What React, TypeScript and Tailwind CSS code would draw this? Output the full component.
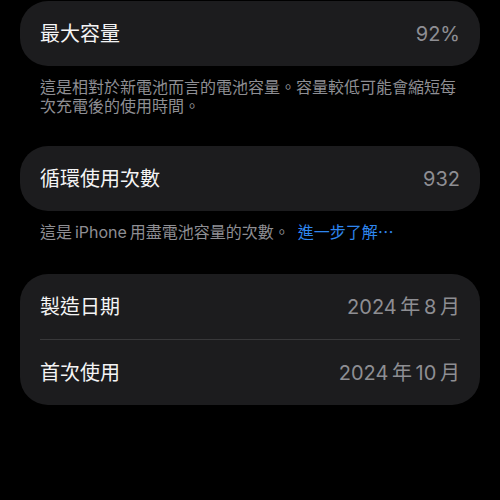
import React from 'react';

const font = {
  fontFamily: '"Inter", "Noto Sans CJK TC", "Noto Sans CJK SC", sans-serif',
};

const Row = ({ label, value }: { label: string; value: string }) => (
  <div className="flex items-center justify-between h-[65px] px-5">
    <span className="text-[20px] text-[#f4f4f5]">{label}</span>
    <span className="text-[20px] text-[#8e8e93]">{value}</span>
  </div>
);

export default function App() {
  return (
    <div className="w-[500px] h-[500px] bg-black overflow-hidden" style={font}>
      <div className="px-5 pt-px">
        {/* Max capacity */}
        <div className="bg-[#1c1c1e] rounded-[28px]">
          <Row label="最大容量" value="92%" />
        </div>
        <p className="mt-3 px-5 text-[16px] leading-[19px] text-[#8e8e93]">
          這是相對於新電池而言的電池容量。容量較低可能會縮短每次充電後的使用時間。
        </p>

        {/* Cycle count */}
        <div className="mt-[30px] bg-[#1c1c1e] rounded-[28px]">
          <Row label="循環使用次數" value="932" />
        </div>
        <p className="mt-3 px-5 text-[16px] leading-[19px] text-[#8e8e93]">
          這是{'\u2009'}iPhone{'\u2009'}用盡電池容量的次數。
          <span className="ml-2 text-[#2f86ef]">進一步了解⋯</span>
        </p>

        {/* Dates */}
        <div className="mt-[32px] bg-[#1c1c1e] rounded-[28px]">
          <Row label="製造日期" value={'2024\u2009年\u20098\u2009月'} />
          <div className="mx-5 h-px bg-[#38383a]" />
          <Row label="首次使用" value={'2024\u2009年\u200910\u2009月'} />
        </div>
      </div>
    </div>
  );
}
